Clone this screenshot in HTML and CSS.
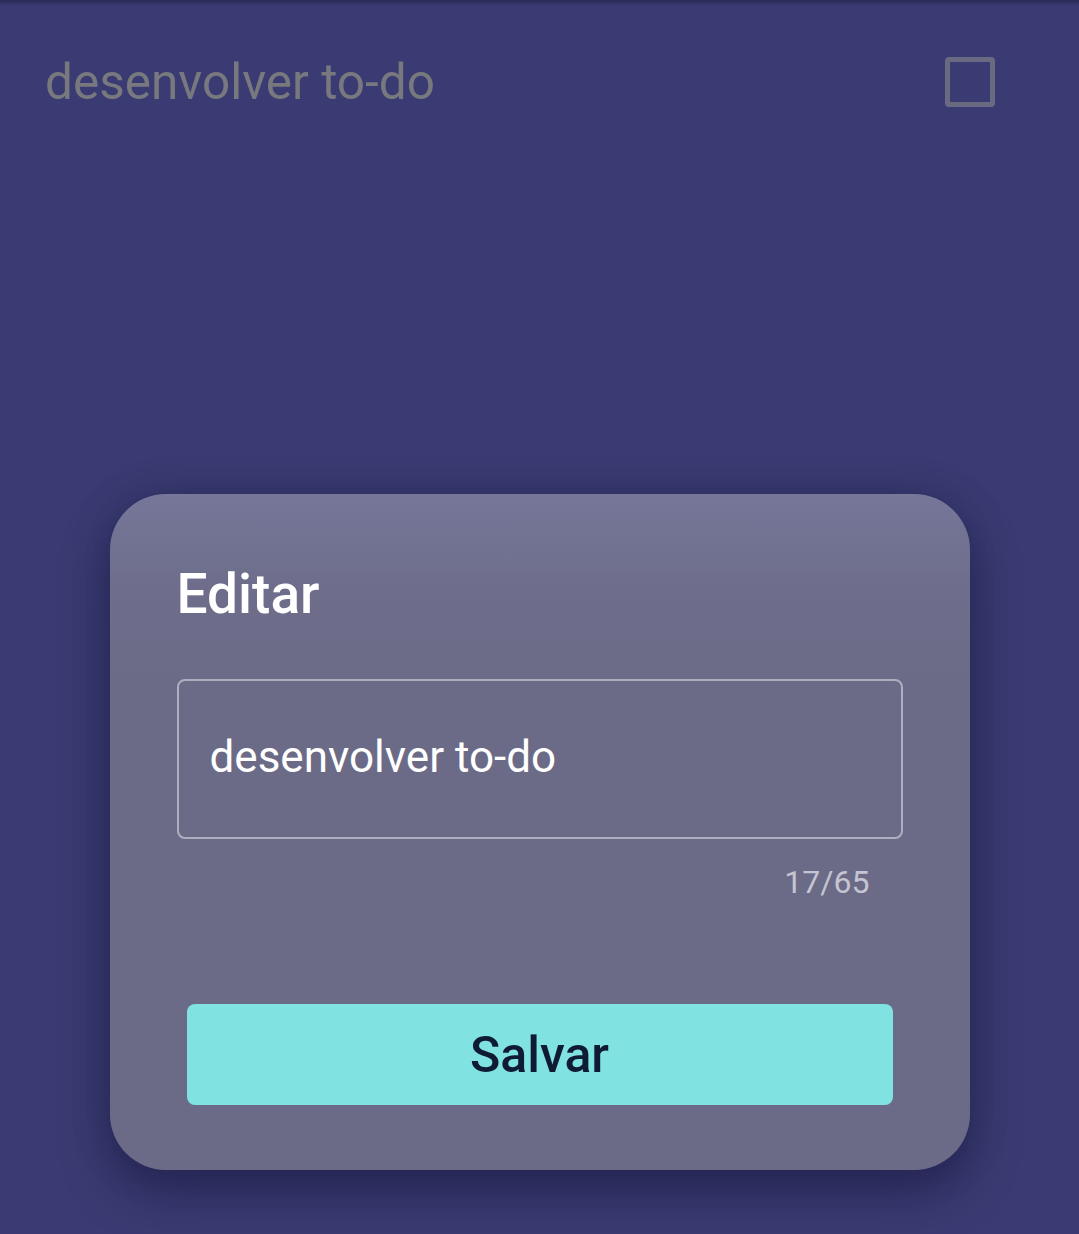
FILE: index.html
```html
<!DOCTYPE html>
<html lang="pt">
<head>
<meta charset="utf-8">
<title>Editar</title>
<link rel="stylesheet" href="styles.css">
</head>
<body>
<div class="screen">
  <div class="topshade"></div>
  <div class="todo-row">
    <span class="todo-text">desenvolver to-do</span>
    <span class="checkbox"></span>
  </div>
  <div class="dialog">
    <h2 class="dialog-title">Editar</h2>
    <div class="field">
      <span class="field-value">desenvolver to-do</span>
    </div>
    <div class="counter">17/65</div>
    <button class="save-btn">Salvar</button>
  </div>
</div>
</body>
</html>
```

FILE: styles.css
```css
html, body {
  margin: 0;
  padding: 0;
}
body {
  background: #3a3b72;
  font-family: Roboto, "Noto Sans", sans-serif;
  width: 1079px;
  height: 1234px;
  overflow: hidden;
}
.screen {
  position: relative;
  height: 1234px;
  display: flex;
  flex-direction: column;
}
.topshade {
  position: absolute;
  left: 0;
  top: 0;
  right: 0;
  height: 6px;
  background: linear-gradient(180deg, rgba(20, 20, 50, 0.45), rgba(20, 20, 50, 0));
}
.todo-row {
  display: flex;
  align-items: center;
  justify-content: space-between;
  padding: 52px 84px 0 45px;
}
.todo-text {
  font-size: 49.5px;
  line-height: 60px;
  color: #78787f;
}
.checkbox {
  width: 50px;
  height: 50px;
  box-sizing: border-box;
  border: 5px solid #696a82;
  border-radius: 4px;
}
.dialog {
  margin: 382px auto 0;
  width: 860px;
  box-sizing: border-box;
  padding: 68px 67px 65px;
  border-radius: 56px;
  background: linear-gradient(180deg, #767799 0px, #6e6e8c 90px, #6b6b87 200px, #6b6b87 100%);
  box-shadow: 0 24px 50px rgba(10, 10, 40, 0.35), 0 0 40px rgba(10, 10, 40, 0.18);
  display: flex;
  flex-direction: column;
}
.dialog-title {
  margin: 0;
  font-size: 55px;
  line-height: 64px;
  font-weight: 500;
  color: #ffffff;
}
.field {
  margin-top: 53px;
  height: 160px;
  box-sizing: border-box;
  border: 2px solid #aeaec0;
  border-radius: 8px;
  display: flex;
  align-items: center;
  padding-left: 31px;
  padding-bottom: 4px;
}
.field-value {
  font-size: 44px;
  color: #ffffff;
}
.counter {
  margin-top: 23px;
  align-self: flex-end;
  margin-right: 33px;
  font-size: 32px;
  line-height: 40px;
  color: #c4c4d2;
}
.save-btn {
  margin: 102px 10px 0 10px;
  height: 101px;
  border: none;
  border-radius: 8px;
  background: #80e2e1;
  color: #0f1a33;
  font-family: Roboto, "Noto Sans", sans-serif;
  font-size: 50px;
  font-weight: 500;
  padding: 0;
}
```
